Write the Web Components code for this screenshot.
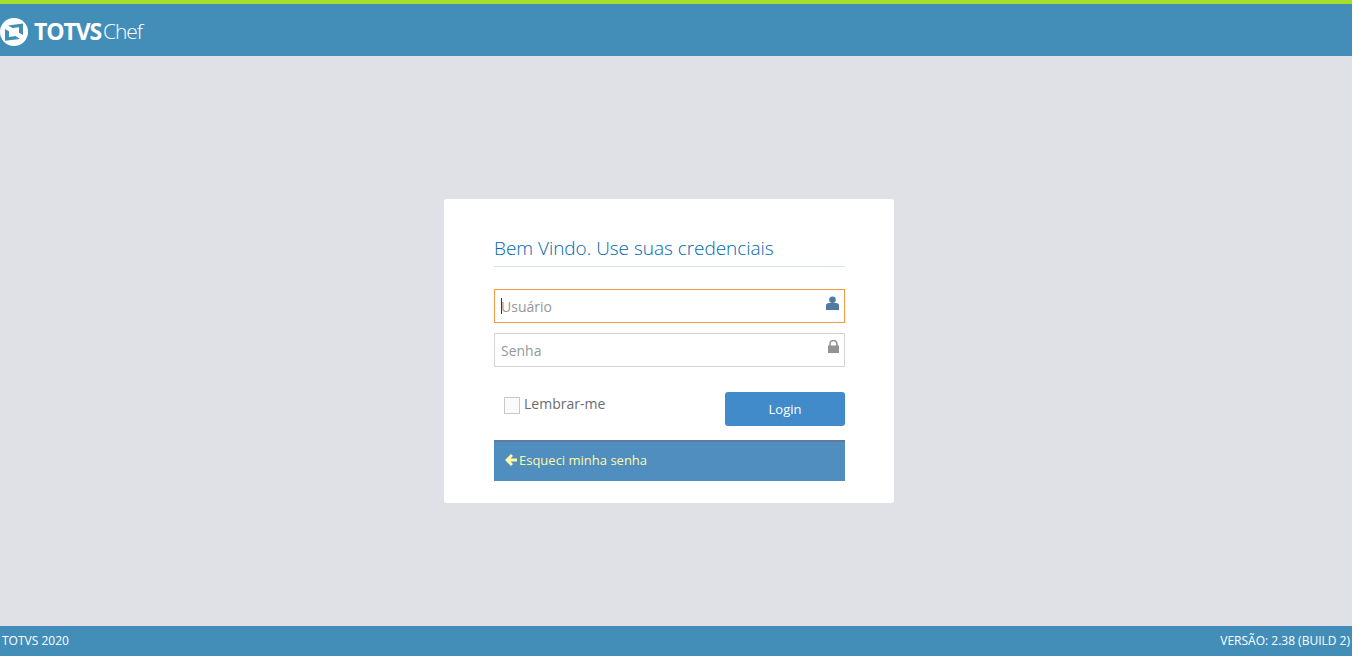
<!DOCTYPE html>
<html lang="pt"><head><meta charset="utf-8"><title>TOTVS Chef</title>
<style>
html,body{margin:0;padding:0;height:100%;background:#fff;overflow:hidden}
body{font-family:"Open Sans",sans-serif;width:1352px}
</style></head><body>
<login-app></login-app>
<script>
function def(name,html){customElements.define(name,class extends HTMLElement{constructor(){super();this.attachShadow({mode:'open'}).innerHTML=html}})}
def('app-logo',`<style>:host{display:flex;align-items:center;color:#fff;height:52px}
svg{display:block;margin-right:6px;margin-top:4px}
.a{font:700 23px/1 "Open Sans",sans-serif;letter-spacing:-1.1px;margin-top:2px}
.b{font:300 21px/1 "Open Sans",sans-serif;margin-left:2px;letter-spacing:-1.1px;margin-top:2px}</style>
<svg width="28" height="28" viewBox="0 0 28 28"><circle cx="14" cy="14" r="14" fill="#fff"/><path d="M8 7.5L23 5.5V17L19 14.7V9.2L12.5 10zM5 11L9 13.3V19L15.5 18 20 21 5 22.8z" fill="#438eb9"/></svg>
<span class="a">TOTVS</span><span class="b">Chef</span>`);
def('app-header',`<style>:host{display:block;border-top:4px solid #a4dd2a;background:#438eb9;height:52px}</style><slot></slot>`);
def('app-footer',`<style>:host{display:flex;justify-content:space-between;align-items:center;height:30px;background:#438eb9;color:#fff;font-size:12px;padding:0 2px 2px;box-sizing:border-box}</style><span>TOTVS 2020</span><span>VERSÃO: 2.38 (BUILD 2)</span>`);
def('text-field',`<style>:host{display:flex;align-items:center;height:34px;box-sizing:border-box;border:1px solid #d5d5d5;padding:0 5px 0 6px;color:#96979a;font-size:14px;background:#fff}
:host([focused]){border-color:#f59942}
.t{flex:1;display:flex;align-items:center}
.c{display:none;width:1px;height:16px;background:#333;margin-right:-1px}
:host([focused]) .c{display:block}
::slotted(svg){display:block;margin-top:-7px}</style><span class="t"><span class="c"></span><slot></slot></span><slot name="icon"></slot>`);
def('login-card',`<style>:host{display:block;box-sizing:border-box;width:450px;height:304px;background:#fff;border-radius:3px;padding:37px 49px 0 50px}
h1{margin:0;font:300 19px/25px "Open Sans",sans-serif;color:#0068b0;height:31px;box-sizing:border-box;border-bottom:1px solid #d5e3ec;letter-spacing:-.03px}
.fields{display:flex;flex-direction:column;gap:10px;margin-top:22px}
.row{display:flex;justify-content:space-between;margin-top:25px;height:34px}
.check{display:flex;align-items:flex-start;gap:4px;padding-left:10px;font-size:14px;line-height:19px;color:#6a6c70;margin-top:2px}
.box{width:16px;height:17px;box-sizing:border-box;border:1px solid #c8c8c8;background:#fafafa;margin-top:3px}
button{width:120px;height:34px;border:0;border-radius:3px;background:#428bca;color:#fff;font:13px "Open Sans",sans-serif;padding:0}
.bar{display:flex;align-items:center;gap:2px;height:41px;box-sizing:border-box;margin-top:14px;border-top:2px solid #5f7a9a;background:#4f8ebf;color:#fef9a8;font-size:13px;padding:0 0 3px 11px}
svg{display:block}</style>
<h1>Bem Vindo. Use suas credenciais</h1>
<div class="fields">
<text-field focused>Usuário<svg slot="icon" width="13" height="14" viewBox="0 0 13 14"><circle cx="6.5" cy="3.8" r="3.3" fill="#4f7aa3"/><path d="M0 14V9.5Q0 7 3 7H10Q13 7 13 9.5V14z" fill="#4f7aa3"/></svg></text-field>
<text-field>Senha<svg slot="icon" width="11" height="13" viewBox="0 0 11 13"><path d="M2 6V4a3.5 3.5 0 017 0v2" fill="none" stroke="#8f8f8f" stroke-width="1.5"/><rect y="5.5" width="11" height="7.5" fill="#939393"/></svg></text-field>
</div>
<div class="row"><label class="check"><span class="box"></span><span>Lembrar-me</span></label><button>Login</button></div>
<div class="bar"><svg width="12" height="12" viewBox="0 0 12 12"><path d="M6 0L0 6 6 12 8 10 5.6 7.6H12V4.4H5.6L8 2z" fill="#fef9a8"/></svg><span>Esqueci minha senha</span></div>`);
def('login-app',`<style>:host{display:flex;flex-direction:column;height:656px}
main{flex:1;background:#e0e1e6;display:flex;justify-content:center;align-items:flex-start;padding:143px 14px 0 0;box-sizing:border-box}</style>
<app-header><app-logo></app-logo></app-header><main><login-card></login-card></main><app-footer></app-footer>`);
</script></body></html>
